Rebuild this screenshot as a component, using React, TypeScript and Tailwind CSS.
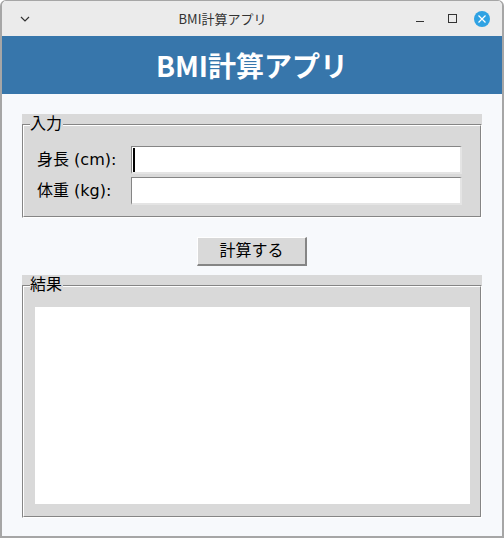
import React from "react";

const jp = { fontFamily: '"Noto Sans CJK JP", "Noto Sans", sans-serif' };
const tk = { fontFamily: '"DejaVu Sans", "Noto Sans CJK JP", sans-serif' };

function Groove({ children }: { children: React.ReactNode }) {
  return (
    <div className="border-t border-l border-b border-r border-t-[#858585] border-l-[#858585] border-b-white border-r-white">
      <div className="border-t border-l border-b border-r border-t-white border-l-white border-b-[#858585] border-r-[#858585]">
        {children}
      </div>
    </div>
  );
}

function LabelFrame({ title, children }: { title: string; children: React.ReactNode }) {
  return (
    <div className="relative bg-[#d9d9d9] pt-[10px]">
      <div
        className="absolute left-[8px] top-0 h-[20px] leading-[20px] text-[16px] text-black bg-[#d9d9d9] pr-[1px]"
        style={tk}
      >
        {title}
      </div>
      <Groove>{children}</Groove>
    </div>
  );
}

function Entry({ cursor }: { cursor?: boolean }) {
  return (
    <div className="h-[28px] w-[331px] bg-white border-t border-l border-t-[#858585] border-l-[#858585] border-b-2 border-r-2 border-b-[#e4e4e4] border-r-[#e4e4e4] flex items-center">
      {cursor && <div className="ml-[1px] w-[2px] h-[24px] bg-black" />}
    </div>
  );
}

export default function App() {
  return (
    <div className="w-[504px] h-[538px] overflow-hidden border-x-2 border-b-2 border-t border-[#a6a6a6] rounded-t-[6px] flex flex-col bg-[#f7f9fc]">
      {/* Title bar */}
      <div className="h-[35px] shrink-0 bg-[#ebebeb] flex items-center" style={jp}>
        <div className="w-[46px] flex items-center">
          <svg className="ml-[18px]" width="10" height="6" viewBox="0 0 10 6">
            <path d="M1 1 L5 5 L9 1" fill="none" stroke="#333" strokeWidth="1.2" />
          </svg>
        </div>
        <div className="flex-1 text-center text-[13px] text-[#333]">BMI計算アプリ</div>
        <div className="w-[105px] flex items-center">
          <div className="ml-[19px] w-[8px] h-[1px] bg-[#333] mt-[6px]" />
          <div className="ml-[24px] w-[9px] h-[9px] border-[1.5px] border-[#333]" />
          <div className="ml-[17px] w-[16px] h-[16px] rounded-full bg-[#2fa2e3] flex items-center justify-center">
            <svg width="8" height="8" viewBox="0 0 8 8">
              <path d="M0.5 0.5 L7.5 7.5 M7.5 0.5 L0.5 7.5" stroke="white" strokeWidth="1.2" />
            </svg>
          </div>
        </div>
      </div>

      {/* Header */}
      <div
        className="h-[58px] shrink-0 bg-[#3776ab] flex items-center justify-center text-white text-[28px] font-bold"
        style={jp}
      >
        BMI計算アプリ
      </div>

      {/* Content */}
      <div className="flex-1 px-[20px] pt-[20px] flex flex-col">
        <LabelFrame title="入力">
          <div className="pt-[20px] pb-[11px] pl-[13px] flex flex-col gap-[3px]" style={tk}>
            <div className="flex items-center">
              <div className="w-[94px] text-[16px] text-black">身長 (cm):</div>
              <Entry cursor />
            </div>
            <div className="flex items-center">
              <div className="w-[94px] text-[16px] text-black">体重 (kg):</div>
              <Entry />
            </div>
          </div>
        </LabelFrame>

        <div className="mt-[19px] flex justify-center">
          <div
            className="w-[110px] h-[29px] bg-[#d9d9d9] border-t border-l border-t-white border-l-white border-b-2 border-r-2 border-b-[#858585] border-r-[#858585] flex items-center justify-center text-[16px] text-black"
            style={tk}
          >
            計算する
          </div>
        </div>

        <div className="mt-[9px]">
          <LabelFrame title="結果">
            <div className="pt-[20px] pb-[12px] pl-[11px]">
              <div className="w-[435px] h-[197px] bg-white" />
            </div>
          </LabelFrame>
        </div>
      </div>
    </div>
  );
}
